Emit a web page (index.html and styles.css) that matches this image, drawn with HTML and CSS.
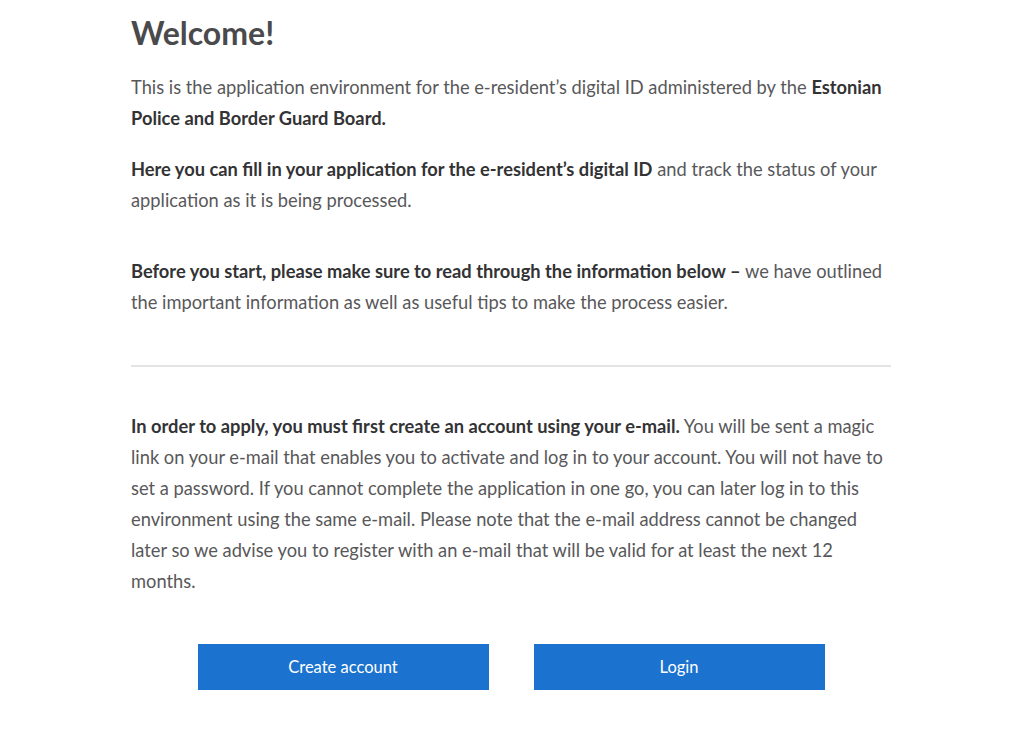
FILE: index.html
```html
<!DOCTYPE html>
<html>
<head>
<meta charset="utf-8">
<link rel="stylesheet" href="styles.css">
</head>
<body>
<main class="page">
  <h1 class="title">Welcome!</h1>
  <p class="text">This is the application environment for the e-resident’s digital ID administered by the <strong>Estonian Police and Border Guard Board.</strong></p>
  <p class="text"><strong>Here you can fill in your application for the e-resident’s digital ID</strong> and track the status of your application as it is being processed.</p>
  <p class="text text-spaced"><strong>Before you start, please make sure to read through the information below –</strong> we have outlined the important information as well as useful tips to make the process easier.</p>
  <hr class="divider">
  <p class="text"><strong>In order to apply, you must first create an account using your e-mail.</strong> You will be sent a magic link on your e-mail that enables you to activate and log in to your account. You will not have to set a password. If you cannot complete the application in one go, you can later log in to this environment using the same e-mail. Please note that the e-mail address cannot be changed later so we advise you to register with an e-mail that will be valid for at least the next 12 months.</p>
  <div class="actions">
    <button class="btn">Create account</button>
    <button class="btn">Login</button>
  </div>
</main>
</body>
</html>
```
FILE: styles.css
```css
html, body {
  margin: 0;
  padding: 0;
  background: #ffffff;
}
body {
  font-family: Lato, "Open Sans", sans-serif;
  color: #58585a;
}
.page {
  width: 760px;
  margin-left: 131px;
  padding-top: 13px;
}
.title {
  margin: 0;
  font-size: 32px;
  line-height: 40px;
  font-weight: 700;
  color: #4a4a4c;
}
.text {
  margin: 0;
  font-size: 18.3px;
  line-height: 31px;
}
.title + .text { margin-top: 19px; }
.text + .text { margin-top: 20px; }
.text.text-spaced { margin-top: 40px; }
.text strong {
  font-weight: 700;
  color: #333335;
}
.divider {
  border: 0;
  height: 2px;
  background: #e4e4e4;
  margin: 47px 0 44px;
}
.actions {
  display: flex;
  justify-content: center;
  gap: 45px;
  margin-top: 47px;
}
.btn {
  width: 291px;
  height: 46px;
  border: 0;
  background: #1b72cf;
  color: #ffffff;
  font-family: inherit;
  font-size: 16.5px;
  cursor: pointer;
}
```
